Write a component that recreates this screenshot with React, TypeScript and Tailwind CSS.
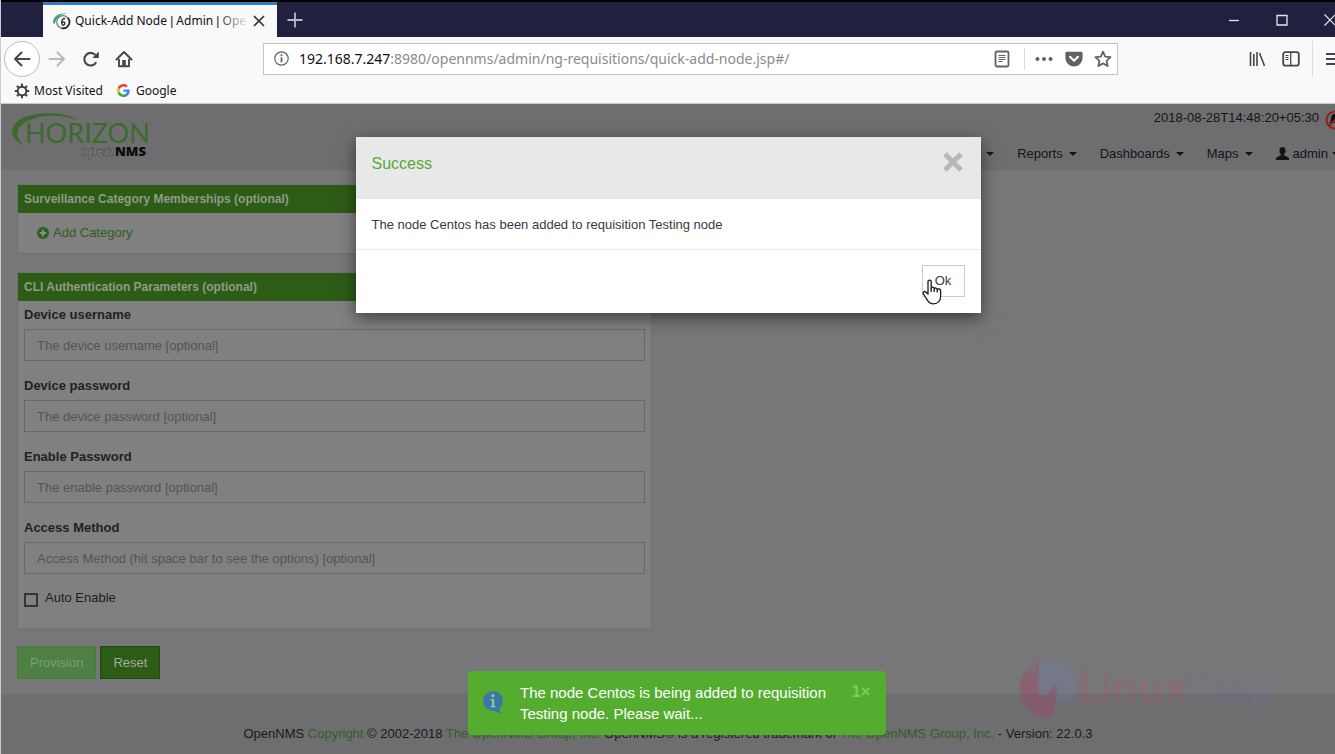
import React from "react";

const fields = [
  { id: "device-username", label: "Device username", placeholder: "The device username [optional]" },
  { id: "device-password", label: "Device password", placeholder: "The device password [optional]" },
  { id: "enable-password", label: "Enable Password", placeholder: "The enable password [optional]" },
  {
    id: "access-method",
    label: "Access Method",
    placeholder: "Access Method (hit space bar to see the options) [optional]",
  },
];

function Favicon() {
  return (
    <svg width="18" height="18" viewBox="0 0 18 18" fill="none" className="shrink-0">
      <path d="M0 11C0 4 6 .3 15 1.800 8 1.500 3.500 5 1.800 12z" fill="#2fae62" />
      <circle cx="10" cy="10" r="6.300" stroke="#77797d" strokeWidth="1.200" />
      <path d="M14.800 5.800a6.300 6.300 0 0 1-6 10.400" stroke="#222" strokeWidth="1.600" />
      <path d="M12 7.200c-.8-1.300-2.800-.5-3.200 2-.4 2.400.2 4.100 1.400 4 1.400-.2 2-2.200 1.300-3-.6-.6-1.800-.2-2.600.8" stroke="#333" strokeWidth="1.400" />
    </svg>
  );
}

function BackIcon() {
  return (
    <svg width="18" height="18" viewBox="0 0 18 18" fill="none" stroke="currentColor" strokeWidth="2" strokeLinecap="round" strokeLinejoin="round">
      <path d="M16.500 9H2M8.500 2.500 2 9l6.500 6.500" />
    </svg>
  );
}

function ForwardIcon() {
  return (
    <svg width="18" height="18" viewBox="0 0 18 18" fill="none" stroke="currentColor" strokeWidth="2" strokeLinecap="round" strokeLinejoin="round">
      <path d="M1.500 9H16M9.500 2.500 16 9l-6.500 6.500" />
    </svg>
  );
}

function ReloadIcon() {
  return (
    <svg width="18" height="18" viewBox="0 0 18 18" fill="none">
      <path d="M14.200 12.200A6.300 6.300 0 1 1 13.500 5.200" stroke="currentColor" strokeWidth="2.100" />
      <path d="M16.800 1.500V8h-6.500z" fill="currentColor" />
    </svg>
  );
}

function HomeIcon() {
  return (
    <svg width="18" height="18" viewBox="0 0 18 18" fill="none">
      <path d="M1.500 9.500 9 2l7.500 7.500" stroke="currentColor" strokeWidth="2" strokeLinecap="round" strokeLinejoin="round" />
      <path d="M4 9v7.200h10V9" stroke="currentColor" strokeWidth="1.900" strokeLinejoin="round" />
      <path d="M7.200 10h3.600v6H7.200z" fill="currentColor" />
    </svg>
  );
}

function GearIcon() {
  return (
    <svg width="16" height="16" viewBox="0 0 16 16" fill="none" stroke="#3c3c40">
      <circle cx="8" cy="8" r="4.300" strokeWidth="1.900" />
      <path d="M8 .8v2.400M8 12.800v2.400M.8 8h2.400M12.800 8h2.400M2.900 2.900l1.700 1.700M11.400 11.400l1.700 1.700M13.100 2.900l-1.700 1.700M4.600 11.400l-1.700 1.700" strokeWidth="2" />
    </svg>
  );
}

function GoogleIcon() {
  return (
    <svg width="13" height="13" viewBox="0 0 48 48">
      <path fill="#EA4335" d="M24 9.500c3.540 0 6.710 1.220 9.210 3.600l6.850-6.850C35.900 2.380 30.470 0 24 0 14.620 0 6.510 5.380 2.560 13.220l7.980 6.190C12.430 13.720 17.740 9.500 24 9.500z" />
      <path fill="#4285F4" d="M46.980 24.550c0-1.570-.15-3.090-.38-4.550H24v9.020h12.940c-.58 2.960-2.260 5.480-4.780 7.180l7.730 6c4.510-4.180 7.090-10.360 7.090-17.650z" />
      <path fill="#FBBC05" d="M10.530 28.590c-.48-1.450-.76-2.990-.76-4.590s.27-3.140.76-4.590l-7.980-6.190C.92 16.460 0 20.120 0 24c0 3.880.92 7.540 2.560 10.780l7.970-6.190z" />
      <path fill="#34A853" d="M24 48c6.480 0 11.930-2.130 15.890-5.810l-7.730-6c-2.150 1.450-4.920 2.300-8.160 2.300-6.260 0-11.570-4.220-13.470-9.910l-7.980 6.190C6.510 42.620 14.620 48 24 48z" />
    </svg>
  );
}

function Bar() {
  return <span className="font-['Liberation_Sans',sans-serif]">|</span>;
}

function BrowserChrome() {
  return (
    <div className="bg-[#f9f9fb] font-['Noto_Sans','Open_Sans',sans-serif] text-[#111]">
      <div className="box-content flex h-[35px] items-stretch border-t-2 border-black bg-[#22203f] pl-[42px]">
        <div className="flex w-[234px] items-center border-t-3 border-[#2f7fc4] bg-[#f9f9fb] pl-2.5 pr-3">
          <Favicon />
          <span className="relative ml-1 flex-1 whitespace-nowrap text-[12px]">
            Quick-Add Node <Bar /> Admin <Bar /> Ope
            <span className="absolute inset-y-0 right-0 w-8 bg-linear-to-r from-transparent to-[#f9f9fb]" />
          </span>
          <button aria-label="Close tab" className="ml-1 text-[#333]">
            <svg width="12" height="12" viewBox="0 0 12 12" stroke="currentColor" strokeWidth="1.700">
              <path d="M1 1l10 10M11 1 1 11" />
            </svg>
          </button>
        </div>
        <button aria-label="New tab" className="ml-2.5 text-[#b9b8cc]">
          <svg width="16" height="16" viewBox="0 0 16 16" stroke="currentColor" strokeWidth="1.800">
            <path d="M8 .5v15M.5 8h15" />
          </svg>
        </button>
        <div className="ml-auto -mr-px flex items-center gap-9 text-[#e4e4ee]">
          <button aria-label="Minimize">
            <svg width="12" height="12" viewBox="0 0 12 12" stroke="currentColor" strokeWidth="1.300">
              <path d="M1 6.500h10" />
            </svg>
          </button>
          <button aria-label="Maximize">
            <svg width="12" height="12" viewBox="0 0 12 12" stroke="currentColor" strokeWidth="1.300" fill="none">
              <path d="M1 1.500h10v9.500H1z" />
            </svg>
          </button>
          <button aria-label="Close">
            <svg width="12" height="12" viewBox="0 0 12 12" stroke="currentColor" strokeWidth="1.200">
              <path d="M.5.5l11 11M11.500.5l-11 11" />
            </svg>
          </button>
        </div>
      </div>

      <div className="flex h-[43px] items-center text-[#47474b]">
        <button aria-label="Back" className="ml-[3px] flex size-9 items-center justify-center rounded-full border border-[#bdbdc0] bg-white">
          <BackIcon />
        </button>
        <button aria-label="Forward" className="ml-2 text-[#b9b9bc]">
          <ForwardIcon />
        </button>
        <button aria-label="Reload" className="ml-4">
          <ReloadIcon />
        </button>
        <button aria-label="Home" className="ml-[15px]">
          <HomeIcon />
        </button>
        <div className="ml-[130px] flex h-8 flex-1 items-center border border-[#c4c4c8] bg-white pl-2.5 pr-[5px] text-[#626266]">
          <svg width="15" height="15" viewBox="0 0 15 15" fill="none" stroke="currentColor">
            <circle cx="7.500" cy="7.500" r="6.700" strokeWidth="1.200" />
            <path d="M7.500 6.300v5" strokeWidth="1.800" />
            <path d="M7.500 3.300v1.800" strokeWidth="1.800" />
          </svg>
          <span className="ml-2.5 flex-1 whitespace-nowrap text-[14px] text-[#8b8b8f]">
            <span className="text-[#111]">192.168.7.247</span>:8980/opennms/admin/ng-requisitions/quick-add-node.jsp#/
          </span>
          <button aria-label="Reader view">
            <svg width="16" height="18" viewBox="0 0 16 18" fill="none" stroke="currentColor">
              <rect x="1.500" y="1.500" width="13" height="15" rx="1.500" strokeWidth="1.800" />
              <path d="M4.500 5.500h7M4.500 7.500h7M4.500 9.500h7M4.500 11.500h4" strokeWidth="1" />
            </svg>
          </button>
          <span className="ml-3.5 h-[22px] w-px bg-[#dcdcdf]" />
          <button aria-label="Page actions" className="ml-2.5">
            <svg width="18" height="6" viewBox="0 0 18 6" fill="currentColor">
              <circle cx="2.500" cy="3" r="2" />
              <circle cx="9" cy="3" r="2" />
              <circle cx="15.500" cy="3" r="2" />
            </svg>
          </button>
          <button aria-label="Save to Pocket" className="ml-3">
            <svg width="18" height="16" viewBox="0 0 18 16">
              <path d="M2 .8h14c1 0 1.600.6 1.600 1.600V7a8.600 8.600 0 0 1-17.200 0V2.400C.4 1.400 1 .8 2 .8z" fill="currentColor" />
              <path d="M5 5.800l4 3.900 4-3.900" fill="none" stroke="#fff" strokeWidth="2" strokeLinecap="round" strokeLinejoin="round" />
            </svg>
          </button>
          <button aria-label="Bookmark this page" className="ml-[11px]">
            <svg width="18" height="18" viewBox="0 0 18 18" fill="none">
              <path d="M9 1.700l2.200 4.900 5.300.6-3.900 3.600 1 5.200L9 13.400 4.400 16l1-5.200L1.500 7.200l5.300-.6z" stroke="currentColor" strokeWidth="1.800" strokeLinejoin="round" />
            </svg>
          </button>
        </div>
        <div className="-mr-1 ml-[130px] flex items-center text-[#47474b]">
          <button aria-label="Library">
            <svg width="18" height="16" viewBox="0 0 18 16" fill="none" stroke="currentColor" strokeWidth="1.600">
              <path d="M2.500 1v14M5.800 3v12M9 1v14M11.500 2l5 13" />
            </svg>
          </button>
          <button aria-label="Sidebars" className="ml-4">
            <svg width="18" height="16" viewBox="0 0 18 16" fill="none" stroke="currentColor">
              <rect x="1.200" y="1.200" width="15.600" height="13.400" rx="2" strokeWidth="1.800" />
              <path d="M8.700 1.500v13" strokeWidth="1.300" />
              <path d="M3.500 4.500h3M3.500 6.500h3M3.500 8.500h3" strokeWidth="1" />
            </svg>
          </button>
          <span className="ml-3 h-9 w-px bg-[#dcdcdf]" />
          <button aria-label="Open menu" className="ml-3">
            <svg width="14" height="14" viewBox="0 0 14 14" stroke="currentColor" strokeWidth="1.800">
              <path d="M1 2h13M1 7h13M1 12h13" />
            </svg>
          </button>
        </div>
      </div>

      <div className="flex h-6 items-center gap-3.5 border-b border-[#c9c9cc] pb-0.5 pl-[13px] text-[12px]">
        <a href="#most-visited" className="flex items-center gap-1">
          <GearIcon />
          Most Visited
        </a>
        <a href="#google" className="flex items-center gap-1.5">
          <GoogleIcon />
          Google
        </a>
      </div>
    </div>
  );
}

function HorizonLogo() {
  return (
    <svg width="140" height="48" viewBox="0 0 140 48" aria-label="Horizon OpenNMS" className="shrink-0">
      <path d="M12 33C-4 26-2 9 17 4 36-1 55 1 68 8 50 3 33 2 19 8 3 15 4 24 12 33z" fill="#3a6b2a" />
      <text x="14" y="31" fontFamily="Lato" fontSize="27" fill="#3a6b2a">HORIZON</text>
      <text x="69" y="44" fontFamily="Open Sans" fontSize="15" fontStyle="italic" fontWeight="600" fill="#98989a" stroke="#3c3c3e" strokeWidth=".6">open</text>
      <text x="104" y="44" fontFamily="Open Sans" fontSize="13" fontWeight="800" fill="#0a0a0a">NMS</text>
    </svg>
  );
}

function Caret() {
  return (
    <svg width="8" height="4" viewBox="0 0 8 4" fill="currentColor">
      <path d="M0 0h8L4 4z" />
    </svg>
  );
}

function SiteHeader() {
  return (
    <header className="flex h-[66px] justify-between overflow-hidden bg-[#6e6e70] text-[13px] text-[#141414]">
      <a href="#home" className="pt-2 pl-2.5">
        <HorizonLogo />
      </a>
      <div className="flex flex-col items-end">
        <div className="-mr-[10px] flex h-7 items-center gap-1.5">
          <span>2018-08-28T14:48:20+05:30</span>
          <svg width="20" height="20" viewBox="0 0 20 20" fill="none" className="mt-1">
            <path d="M10 4c-3 0-4 2-4 5 0 2-1 3-2 4h12c-1-1-2-2-2-4 0-3-1-5-4-5z" fill="#111" />
            <circle cx="10" cy="10" r="8.500" stroke="#8e2323" strokeWidth="2.200" />
            <path d="M4 16 16 4" stroke="#8e2323" strokeWidth="2.200" />
          </svg>
        </div>
        <nav className="-mr-[5px] flex items-center gap-[23px] pt-3">
          <a href="#reports" className="flex items-center gap-1.5" aria-label="Info"><Caret /></a>
          <a href="#reports" className="flex items-center gap-1.5">Reports <Caret /></a>
          <a href="#dashboards" className="flex items-center gap-1.5">Dashboards <Caret /></a>
          <a href="#maps" className="flex items-center gap-1.5">Maps <Caret /></a>
          <a href="#admin" className="flex items-center gap-1">
            <svg width="13" height="13" viewBox="0 0 13 13" fill="currentColor">
              <path d="M6.500 0C8.500 0 9.600 1.400 9.600 3.500 9.600 5 9 6.300 8.100 7.100v1.200l4 1.900c.6.300.9.800.9 1.500V13H0v-1.300c0-.7.300-1.200.9-1.500l4-1.900V7.100C4 6.300 3.400 5 3.400 3.500 3.400 1.400 4.500 0 6.500 0z" />
            </svg>
            admin <Caret />
          </a>
        </nav>
      </div>
    </header>
  );
}

function Panel({ title, children }: { title: string; children: React.ReactNode }) {
  return (
    <section className="border border-[#727274] bg-[#808081]">
      <h2 className="bg-[#2d5c17] px-1.5 text-[12px] leading-7 font-bold text-[#8f9a89]">{title}</h2>
      {children}
    </section>
  );
}

function Watermark() {
  return (
    <div className="pointer-events-none absolute right-[40px] bottom-9 opacity-30 blur-[1px]">
      <svg width="276" height="60" viewBox="0 0 276 60">
        <path d="M14 8C34-4 58 8 58 28c0 7-2 11-6 15H37c4-8 5-14 1-17-4 2-6 8-10 14l-6-4z" fill="#6f80b4" />
        <path d="M1 26c2-8 5-12 8-15v14l2-16 3-2v18l3-19 3-2-1 26c0 6 2 9 5 9 5 0 7-7 11-11 2-2 4-1 3 2-3 8-1 16-6 30C16 60 0 50 1 26z" fill="#b03064" />
        <text x="59" y="44" fontFamily="DejaVu Sans" fontSize="41" fill="#c8446e">Linux</text>
        <text x="168" y="44" fontFamily="DejaVu Sans" fontSize="37" fill="#6a70a8">Help</text>
      </svg>
    </div>
  );
}

function HandCursor() {
  return (
    <svg width="22" height="26" viewBox="0 0 22 26" className="pointer-events-none absolute top-3.5 left-0">
      <path
        d="M6 2.800C6 .6 9.200.6 9.200 2.800v6.400c.4-1.500 3-1.300 3 .6.500-1.300 3-1 3 .8.600-1.200 3.400-.8 3.400 1.200v5.400c0 4.500-2.700 7.600-7 7.600-3.300 0-5-1.500-6.600-4.200L1.500 15c-1-1.800 1-3.400 2.600-1.800L6 15z"
        fill="#fff"
        stroke="#1c1c1c"
        strokeWidth="1.300"
        strokeLinejoin="round"
      />
      <path d="M9.200 9v4M12.200 9.800V13M15.200 10.600V13.500" stroke="#1c1c1c" strokeWidth="1.300" />
    </svg>
  );
}

function SuccessDialog() {
  return (
    <div className="absolute inset-x-0 top-[137px] flex justify-center">
      <div role="dialog" aria-labelledby="dialog-title" className="w-[625px] bg-white text-[13px] text-[#3b3b3b] shadow-[0_5px_15px_rgba(0,0,0,0.5)]">
        <div className="flex h-[62px] items-start justify-between bg-[#e8e7e9] px-4 pt-[15px]">
          <h1 id="dialog-title" className="text-[16px] leading-6 text-[#55ab35]">Success</h1>
          <button aria-label="Close dialog" className="mr-0.5 text-[#b7b7b8]">
            <svg width="20" height="20" viewBox="0 0 20 20" stroke="currentColor" strokeWidth="5">
              <path d="M2 2l16 16M18 2 2 18" />
            </svg>
          </button>
        </div>
        <p className="border-b border-[#e8e8e9] pt-4 pb-3.5 px-4 leading-5">The node Centos has been added to requisition Testing node</p>
        <div className="flex justify-end px-4 pt-[15px] pb-4">
          <div className="relative">
            <button className="h-8 w-[43px] border border-[#cbcbce] bg-white">Ok</button>
            <HandCursor />
          </div>
        </div>
      </div>
    </div>
  );
}

function Toast() {
  return (
    <div className="absolute inset-x-0 bottom-[19px] flex justify-center pl-[18px]">
      <div role="status" className="flex w-[418px] items-start rounded-sm bg-[#54ad2f] py-[11px] pr-4 pl-3.5 text-white">
        <svg width="22" height="24" viewBox="0 0 22 24" className="mt-2 shrink-0">
          <circle cx="11" cy="11" r="10" fill="#3b76a5" />
          <path d="M10 19.500 18.500 24 17 16z" fill="#3b76a5" />
          <circle cx="11" cy="5.800" r="1.700" fill="#8fc79a" />
          <path d="M8.500 9h3.700v7h1.500v1.300H8.500V16H10v-5.700H8.500z" fill="#8fc79a" />
        </svg>
        <p className="ml-4 flex-1 text-[15px] leading-[21px]">
          The node Centos is being added to requisition
          <br />
          Testing node. Please wait...
        </p>
        <button aria-label="Dismiss 1 notification" className="text-[16px] leading-5 font-bold text-[#7fca62]">
          1×
        </button>
      </div>
    </div>
  );
}

export default function App() {
  return (
    <div className="relative flex min-h-screen flex-col overflow-hidden border-l border-[#c9c9d2] bg-[#777678] font-['Liberation_Sans',Arial,sans-serif] text-[13px] text-[#1e1e1e]">
      <BrowserChrome />
      <SiteHeader />
      <main className="px-4 pt-3.5 pb-[15px]">
        <div className="flex w-[calc(50%-16px)] flex-col gap-[18px]">
          <Panel title="Surveillance Category Memberships (optional)">
            <a href="#add-category" className="flex h-10 items-center gap-1 pl-[19px] text-[#2f5f1c]">
              <svg width="12" height="12" viewBox="0 0 12 12">
                <circle cx="6" cy="6" r="6" fill="currentColor" />
                <path d="M6 2.800v6.400M2.800 6h6.400" stroke="#8b8b8b" strokeWidth="2" />
              </svg>
              Add Category
            </a>
          </Panel>
          <Panel title="CLI Authentication Parameters (optional)">
            <div className="px-1.5 pb-5">
              {fields.map((f) => (
                <div key={f.id} className="pt-0.5 pb-[11px]">
                  <label htmlFor={f.id} className="block leading-6 font-bold text-[#222]">{f.label}</label>
                  <input
                    id={f.id}
                    placeholder={f.placeholder}
                    className="mt-0.5 block h-8 w-full border border-[#68686a] bg-[#808081] px-3 placeholder:text-[#545456]"
                  />
                </div>
              ))}
              <label className="flex h-5 items-center gap-[7px] box-content pt-[3px]">
                <input type="checkbox" className="mt-1 size-3.5 appearance-none border-2 border-[#343436]" />
                Auto Enable
              </label>
            </div>
          </Panel>
        </div>
        <div className="mt-[17px] flex gap-1">
          <button disabled className="h-[33px] border border-[#477c38] bg-[#4e7f44] px-3 text-[#78a071]">Provision</button>
          <button className="h-[33px] border border-[#21480f] bg-[#2d5c17] px-3 text-[#a3aba0]">Reset</button>
        </div>
      </main>
      <footer className="flex-1 bg-[#6e6e70] pt-[30px] text-center leading-5 text-[#1a1a1a]">
        OpenNMS <a href="#copyright" className="text-[#335e26]">Copyright</a> © 2002-2018{" "}
        <a href="#group" className="text-[#335e26]">The OpenNMS Group, Inc.</a> OpenNMS® is a registered trademark of{" "}
        <a href="#trademark" className="text-[#335e26]">The OpenNMS Group, Inc.</a> - Version: 22.0.3
      </footer>
      <Watermark />
      <Toast />
      <SuccessDialog />
    </div>
  );
}
